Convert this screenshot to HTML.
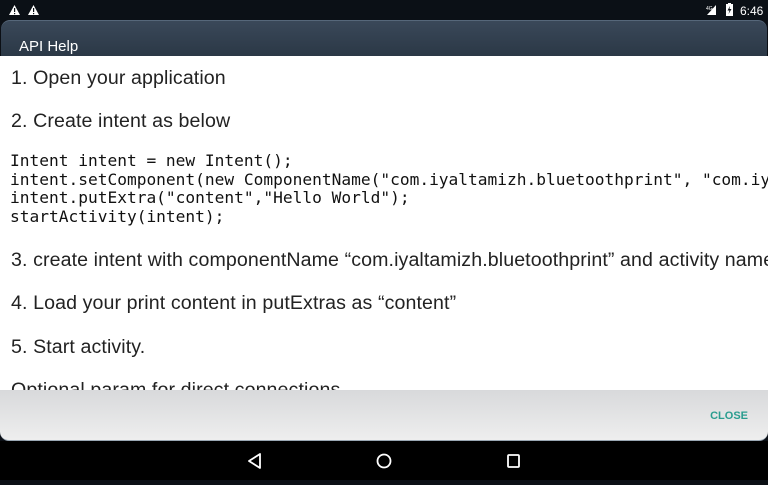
<!DOCTYPE html>
<html><head><meta charset="utf-8"><style>
*{margin:0;padding:0;box-sizing:border-box}
body{width:768px;height:480px;overflow:hidden;background:#0b0f15;font-family:"Liberation Sans",sans-serif;position:relative}
.status{position:absolute;left:0;top:0;width:768px;height:20px;background:#0b1016}
.hdr{position:absolute;left:1px;top:20px;width:766px;height:36px;border-radius:9px 9px 0 0;background:linear-gradient(#3a4859,#2b3846);border-top:1px solid #56677a}
.hdr span{position:absolute;left:18px;top:17px;color:#fff;font-size:15px}
.content{position:absolute;left:0;top:56px;width:768px;height:334px;background:#fff;overflow:hidden;color:#222}
.p{position:absolute;left:11px;font-size:19.6px;white-space:nowrap;letter-spacing:0.1px}
.code{position:absolute;left:10px;top:96px;font-family:"DejaVu Sans Mono",monospace;font-size:16.2px;line-height:18.7px;white-space:pre;color:#111}
.foot{position:absolute;left:0;top:390px;width:768px;height:51px;background:linear-gradient(#d8d9db,#eeeeee);border-radius:0 0 9px 9px;border-bottom:1px solid #9aa7b3}
.foot span{position:absolute;right:20px;top:20px;font-size:11px;font-weight:bold;color:#2a9d8f}
.nav{position:absolute;left:0;top:441px;width:768px;height:39px;background:#000}
</style></head><body>
<div class="status">
<svg width="768" height="20" style="position:absolute;left:0;top:0">
<polygon points="9,15 14.5,5 20,15" fill="#fff"/><rect x="14" y="8" width="1.2" height="4" fill="#0b1016"/><rect x="14" y="13" width="1.2" height="1.2" fill="#0b1016"/>
<polygon points="28,15 33.5,5 39,15" fill="#fff"/><rect x="33" y="8" width="1.2" height="4" fill="#0b1016"/><rect x="33" y="13" width="1.2" height="1.2" fill="#0b1016"/>
<polygon points="707,15 716,5 716,15" fill="#fff"/><text x="706" y="10" font-size="5" fill="#fff" font-family="Liberation Sans">4G</text>
<rect x="726" y="4" width="7" height="12" fill="#fff"/><rect x="728" y="3" width="3" height="1.5" fill="#fff"/>
<polygon points="730,6 727.5,10.5 729.5,10.5 728.5,14 731.5,9 729.5,9" fill="#0b1016"/>
<text x="740" y="15" font-size="12" fill="#fff" font-family="Liberation Sans">6:46</text>
</svg></div>
<div class="hdr"><span>API Help</span></div>
<div class="content">
<div class="p" style="top:11px">1. Open your application</div>
<div class="p" style="top:54px">2. Create intent as below</div>
<div class="code">Intent intent = new Intent();
intent.setComponent(new ComponentName("com.iyaltamizh.bluetoothprint", "com.iyaltamizh.bluetoothprint.MainActivity"));
intent.putExtra("content","Hello World");
startActivity(intent);</div>
<div class="p" style="top:193px">3. create intent with componentName “com.iyaltamizh.bluetoothprint” and activity name</div>
<div class="p" style="top:236px">4. Load your print content in putExtras as “content”</div>
<div class="p" style="top:280px">5. Start activity.</div>
<div class="p" style="top:323px">Optional param for direct connections</div>
</div>
<div class="foot"><span>CLOSE</span></div>
<div class="nav"><svg width="768" height="39">
<polygon points="260,13 260,27 249,20" fill="none" stroke="#fff" stroke-width="1.8" stroke-linejoin="round"/>
<circle cx="384" cy="20" r="6.5" fill="none" stroke="#fff" stroke-width="1.8"/>
<rect x="508" y="14" width="11" height="12" rx="1" fill="none" stroke="#fff" stroke-width="1.8"/>
</svg></div>
</body></html>
